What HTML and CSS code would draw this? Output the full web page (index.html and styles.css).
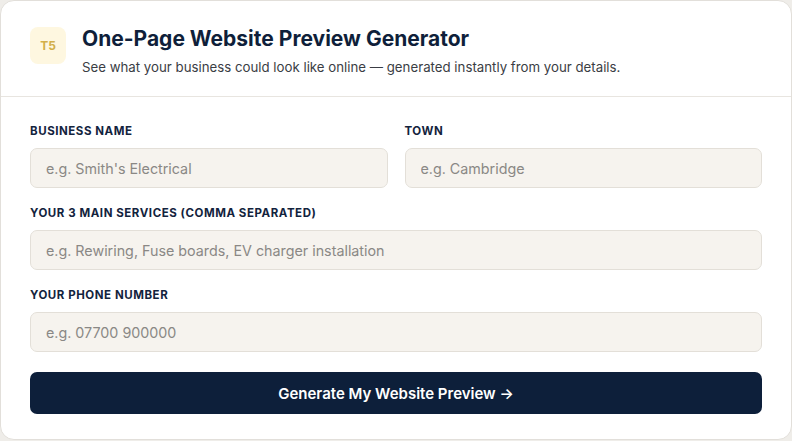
FILE: index.html
```html
<!DOCTYPE html>
<html lang="en">
<head>
<meta charset="utf-8">
<title>One-Page Website Preview Generator</title>
<link rel="stylesheet" href="styles.css">
</head>
<body>
<div class="card">
  <header class="head">
    <div class="logo">T5</div>
    <div class="head-text">
      <h1 class="title">One-Page Website Preview Generator</h1>
      <p class="sub">See what your business could look like online — generated instantly from your details.</p>
    </div>
  </header>
  <form class="form">
    <div class="row two">
      <div class="field">
        <label class="label">Business Name</label>
        <input class="input" type="text" placeholder="e.g. Smith's Electrical">
      </div>
      <div class="field">
        <label class="label">Town</label>
        <input class="input" type="text" placeholder="e.g. Cambridge">
      </div>
    </div>
    <div class="field">
      <label class="label">Your 3 Main Services (comma separated)</label>
      <input class="input" type="text" placeholder="e.g. Rewiring, Fuse boards, EV charger installation">
    </div>
    <div class="field">
      <label class="label">Your Phone Number</label>
      <input class="input" type="text" placeholder="e.g. 07700 900000">
    </div>
    <button class="btn" type="button">Generate My Website Preview →</button>
  </form>
</div>
</body>
</html>
```
FILE: styles.css
```css
* { box-sizing: border-box; }
html, body { margin: 0; padding: 0; }
body {
  background: #efede9;
  font-family: Inter, "Noto Sans", sans-serif;
  color: #13233d;
}
.card {
  background: #fff;
  border: 1px solid #e2dfda;
  border-radius: 14px;
  height: 440px;
  width: 792px;
  overflow: hidden;
}
.head {
  display: flex;
  align-items: flex-start;
  gap: 16px;
  padding: 26px 29px 0 29px;
  height: 96px;
  border-bottom: 1px solid #e8e5e0;
}
.logo {
  width: 36px;
  height: 37px;
  border-radius: 8px;
  background: #fef7e0;
  color: #d2af4a;
  font-weight: 700;
  font-size: 12px;
  display: flex;
  align-items: center;
  justify-content: center;
}
.title {
  margin: 0;
  font-size: 21px;
  line-height: 24px;
  font-weight: 700;
  color: #0f1f3a;
}
.sub {
  margin: 8px 0 0;
  font-size: 13.25px;
  line-height: 16px;
  color: #3a3d44;
}
.form {
  padding: 27px 29px 0;
  display: flex;
  flex-direction: column;
}
.row.two {
  display: grid;
  grid-template-columns: 1fr 1fr;
  gap: 17px;
  margin-bottom: 18px;
}
.field {
  display: flex;
  flex-direction: column;
  margin-bottom: 18px;
}
.row.two .field { margin-bottom: 0; }
.label {
  font-size: 11.5px;
  line-height: 14px;
  font-weight: 700;
  text-transform: uppercase;
  letter-spacing: 0.55px;
  color: #13233d;
  margin-bottom: 10px;
}
.input {
  height: 40px;
  border: 1px solid #e3dfd8;
  background: #f6f3ee;
  border-radius: 7px;
  padding: 0 15px;
  font-family: Inter, "Noto Sans", sans-serif;
  font-size: 14.3px;
  color: #333;
}
.input::placeholder { color: #8a8885; }
.btn {
  margin-top: 2px;
  height: 42px;
  border: 0;
  border-radius: 7px;
  background: #0d1f3a;
  color: #fff;
  font-family: Inter, "Noto Sans", sans-serif;
  font-weight: 600;
  font-size: 15px;
}
```
